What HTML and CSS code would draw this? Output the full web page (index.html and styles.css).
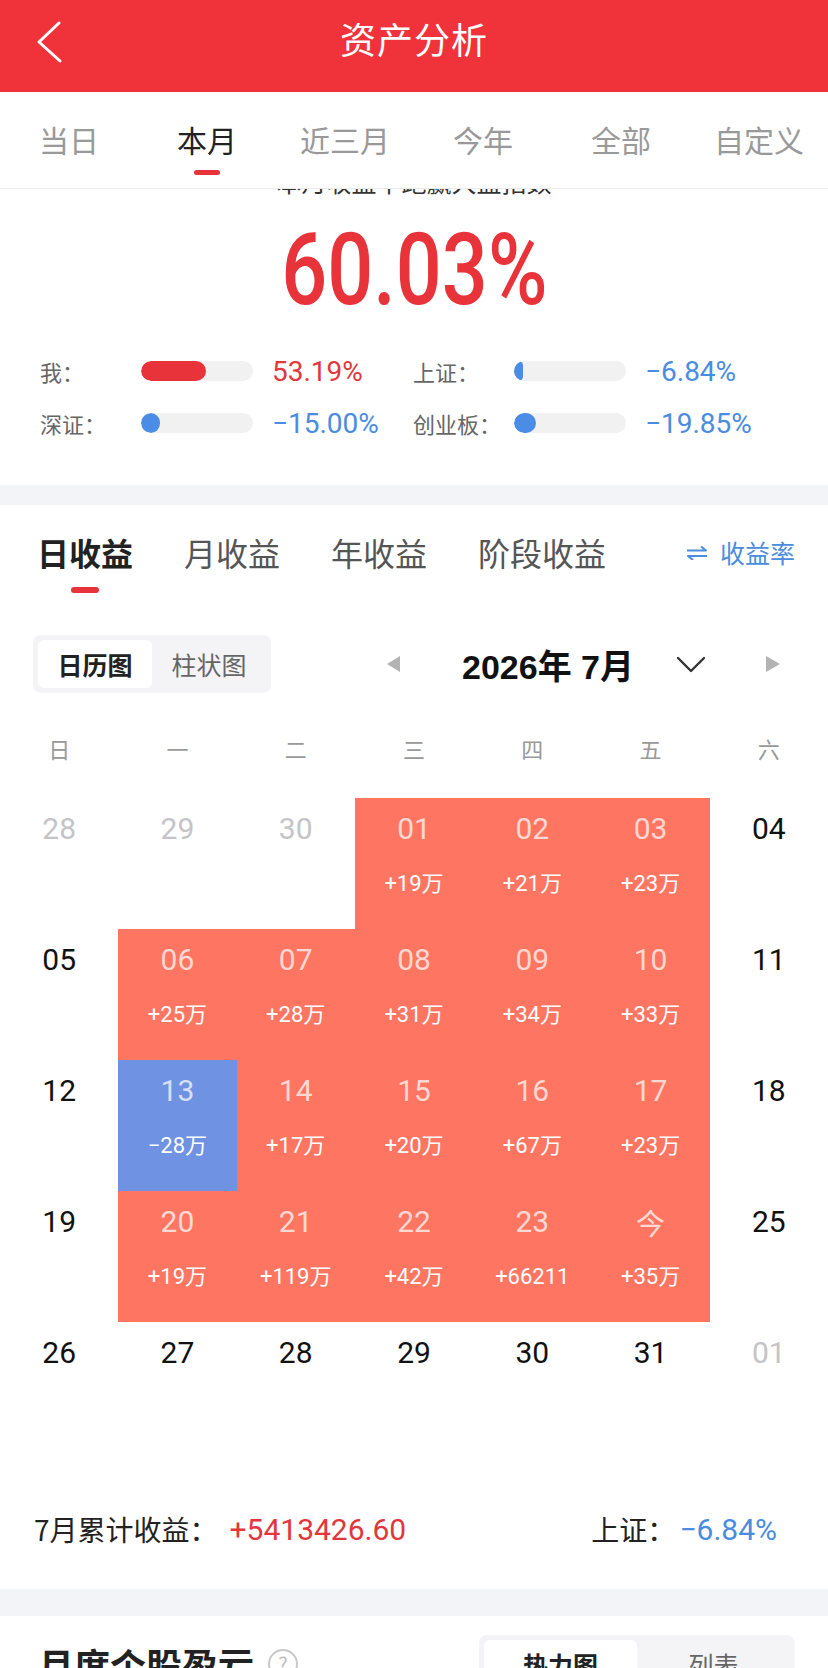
FILE: index.html
```html
<!DOCTYPE html>
<html lang="zh-CN">
<head>
<meta charset="utf-8">
<title>资产分析</title>
<link rel="stylesheet" href="styles.css">
</head>
<body>
<div class="page">
  <header class="header">
    <div class="back">
      <svg width="26" height="42" viewBox="0 0 26 42"><polyline points="22,2 2,21 23,40" fill="none" stroke="#fff" stroke-width="3" stroke-linecap="round" stroke-linejoin="round"/></svg>
    </div>
    <div class="title">资产分析</div>
    <div></div>
  </header>

  <nav class="tabs">
    <div class="tab"><span>当日</span><i></i></div>
    <div class="tab active"><span>本月</span><i></i></div>
    <div class="tab"><span>近三月</span><i></i></div>
    <div class="tab"><span>今年</span><i></i></div>
    <div class="tab"><span>全部</span><i></i></div>
    <div class="tab"><span>自定义</span><i></i></div>
  </nav>

  <section class="overview">
    <div class="peek"><div class="peek-text">本月收益率跑赢大盘指数</div></div>
    <div class="big"><span>60.03%</span></div>
    <div class="cmp">
      <div class="cmp-item">
        <span class="cmp-label">我：</span>
        <span class="track"><span class="fill red" style="width:65px"></span></span>
        <span class="cmp-val up">53.19%</span>
      </div>
      <div class="cmp-item">
        <span class="cmp-label">上证：</span>
        <span class="track"><span class="fill blue" style="width:9px"></span></span>
        <span class="cmp-val down">−6.84%</span>
      </div>
      <div class="cmp-item">
        <span class="cmp-label">深证：</span>
        <span class="track"><span class="fill blue" style="width:19px"></span></span>
        <span class="cmp-val down">−15.00%</span>
      </div>
      <div class="cmp-item">
        <span class="cmp-label">创业板：</span>
        <span class="track"><span class="fill blue" style="width:22px"></span></span>
        <span class="cmp-val down">−19.85%</span>
      </div>
    </div>
  </section>

  <div class="gap gap20"></div>

  <section class="profit">
    <div class="ptabs">
      <div class="ptab active"><span>日收益</span><i></i></div>
      <div class="ptab"><span>月收益</span><i></i></div>
      <div class="ptab"><span>年收益</span><i></i></div>
      <div class="ptab"><span>阶段收益</span><i></i></div>
      <div class="rate">
        <svg width="22" height="14" viewBox="0 0 22 14"><path d="M1 4.5 H20 L15 0.5 M21 10 H2 L7 14" fill="none" stroke="#4A8CE0" stroke-width="2" stroke-linejoin="round"/></svg>
        <span>收益率</span>
      </div>
    </div>

    <div class="ctrl">
      <div class="seg seg1">
        <span class="seg-item on">日历图</span>
        <span class="seg-item">柱状图</span>
      </div>
      <div class="month">
        <span class="tri left"></span>
        <span class="month-text">2026年 7月</span>
        <svg class="chev" width="30" height="17" viewBox="0 0 30 17"><polyline points="2,2 15,15 28,2" fill="none" stroke="#333" stroke-width="2.4" stroke-linecap="round" stroke-linejoin="round"/></svg>
        <span class="tri right"></span>
      </div>
    </div>

    <div class="weekdays">
      <span>日</span><span>一</span><span>二</span><span>三</span><span>四</span><span>五</span><span>六</span>
    </div>

    <div class="cal">
      <div class="cell other"><b>28</b></div>
      <div class="cell other"><b>29</b></div>
      <div class="cell other"><b>30</b></div>
      <div class="cell gain"><b>01</b><em>+19万</em></div>
      <div class="cell gain"><b>02</b><em>+21万</em></div>
      <div class="cell gain"><b>03</b><em>+23万</em></div>
      <div class="cell"><b>04</b></div>

      <div class="cell"><b>05</b></div>
      <div class="cell gain"><b>06</b><em>+25万</em></div>
      <div class="cell gain"><b>07</b><em>+28万</em></div>
      <div class="cell gain"><b>08</b><em>+31万</em></div>
      <div class="cell gain"><b>09</b><em>+34万</em></div>
      <div class="cell gain"><b>10</b><em>+33万</em></div>
      <div class="cell"><b>11</b></div>

      <div class="cell"><b>12</b></div>
      <div class="cell loss"><b>13</b><em>−28万</em></div>
      <div class="cell gain"><b>14</b><em>+17万</em></div>
      <div class="cell gain"><b>15</b><em>+20万</em></div>
      <div class="cell gain"><b>16</b><em>+67万</em></div>
      <div class="cell gain"><b>17</b><em>+23万</em></div>
      <div class="cell"><b>18</b></div>

      <div class="cell"><b>19</b></div>
      <div class="cell gain"><b>20</b><em>+19万</em></div>
      <div class="cell gain"><b>21</b><em>+119万</em></div>
      <div class="cell gain"><b>22</b><em>+42万</em></div>
      <div class="cell gain"><b>23</b><em>+66211</em></div>
      <div class="cell gain"><b class="cjk">今</b><em>+35万</em></div>
      <div class="cell"><b>25</b></div>

      <div class="cell"><b>26</b></div>
      <div class="cell"><b>27</b></div>
      <div class="cell"><b>28</b></div>
      <div class="cell"><b>29</b></div>
      <div class="cell"><b>30</b></div>
      <div class="cell"><b>31</b></div>
      <div class="cell other"><b>01</b></div>
    </div>

    <div class="total">
      <div class="total-left"><span class="t-label">7月累计收益：</span><span class="t-val up">+5413426.60</span></div>
      <div class="total-right"><span class="t-label">上证：</span><span class="t-val down">−6.84%</span></div>
    </div>
  </section>

  <div class="gap gap27"></div>

  <section class="stocks">
    <div class="stocks-title"><span>月度个股盈亏</span><span class="help">?</span></div>
    <div class="seg seg2">
      <span class="seg-item on">热力图</span>
      <span class="seg-item">列表</span>
    </div>
  </section>
</div>
</body>
</html>
```

FILE: styles.css
```css
* { box-sizing: border-box; }
html, body { margin: 0; padding: 0; background: #fff; }
body {
  width: 828px;
  font-family: "Noto Sans CJK SC", "Noto Sans", sans-serif;
  color: #222;
}
.page { width: 828px; overflow: hidden; }

/* header */
.header {
  height: 92px;
  background: #F0323B;
  display: grid;
  grid-template-columns: 1fr auto 1fr;
  align-items: start;
  padding-top: 12px;
}
.back { padding-left: 37px; padding-top: 9px; }
.back svg { display: block; }
.title {
  color: #fff;
  font-size: 36px;
  line-height: 52px;
  font-weight: 400;
  letter-spacing: 1px;
}

/* period tabs */
.tabs {
  height: 97px;
  display: grid;
  grid-template-columns: repeat(6, 1fr);
  border-bottom: 1px solid #ececec;
}
.tab {
  display: flex;
  flex-direction: column;
  align-items: center;
  padding-top: 27px;
}
.tab span { font-size: 30px; line-height: 40px; color: #999; }
.tab i { display: block; width: 26px; height: 5px; border-radius: 3px; margin-top: 11px; background: transparent; }
.tab.active span { color: #222; }
.tab.active i { background: #E8333A; }

/* overview */
.overview { padding-bottom: 36px; }
.peek { height: 9px; overflow: hidden; }
.peek-text {
  margin-top: -23px;
  font-size: 25px;
  line-height: 30px;
  text-align: center;
  color: #333;
  font-weight: 400;
}
.big {
  margin-top: 22px;
  height: 100px;
  line-height: 100px;
  text-align: center;
  font-family: Roboto, "Noto Sans", sans-serif;
  font-size: 100px;
  font-weight: 500;
  color: #E8333A;
}
.big span { display: inline-block; transform: scaleX(0.81); }

.cmp {
  margin-top: 25px;
  padding-left: 40px;
  display: grid;
  grid-template-columns: 373px 373px;
  grid-auto-rows: 52px;
}
.cmp-item { display: flex; align-items: center; }
.cmp-label { width: 101px; font-size: 22px; color: #666; }
.track {
  width: 112px;
  height: 20px;
  border-radius: 10px;
  background: #F1F1F1;
  display: flex;
  overflow: hidden;
}
.fill { height: 20px; border-radius: 10px; }
.fill.red { background: #E8333A; }
.fill.blue { background: #4A8CE6; }
.cmp-val {
  margin-left: 19px;
  font-family: Roboto, "Noto Sans", sans-serif;
  font-size: 28px;
}
.up { color: #E1373C; }
.down { color: #4A8CE0; }

.gap { background: #F3F4F8; }
.gap20 { height: 20px; }
.gap27 { height: 27px; }

/* profit section */
.ptabs {
  display: flex;
  align-items: flex-start;
  padding: 25px 33px 0 37px;
  gap: 51px;
}
.ptab { display: flex; flex-direction: column; align-items: center; }
.ptab span { font-size: 32px; line-height: 44px; color: #555; }
.ptab i { display: block; width: 28px; height: 6px; border-radius: 3px; margin-top: 13px; background: transparent; }
.ptab.active span { color: #222; font-weight: 700; }
.ptab.active i { background: #E8333A; }
.rate {
  margin-left: auto;
  display: flex;
  align-items: center;
  gap: 12px;
  height: 44px;
  color: #4A8CE0;
  font-size: 25px;
}
.rate svg { display: block; margin-top: 2px; }

.ctrl {
  margin-top: 42px;
  height: 58px;
  display: flex;
  align-items: center;
  padding: 0 48px 0 33px;
}
.seg {
  display: flex;
  height: 58px;
  padding: 5px;
  border-radius: 8px;
  background: #F4F4F6;
}
.seg-item {
  display: flex;
  align-items: center;
  justify-content: center;
  font-size: 25px;
  color: #666;
  border-radius: 6px;
}
.seg-item.on { background: #fff; color: #222; font-weight: 700; }
.seg1 { width: 238px; }
.seg1 .seg-item { width: 114px; }

.month { margin-left: auto; display: flex; align-items: center; }
.tri { width: 0; height: 0; border-top: 8px solid transparent; border-bottom: 8px solid transparent; }
.tri.left { border-right: 13px solid #B3B3B3; }
.tri.right { border-left: 14px solid #B3B3B3; margin-left: 60px; }
.month-text {
  margin-left: 62px;
  font-family: "Liberation Sans", "Noto Sans CJK SC", sans-serif;
  font-weight: 700;
  font-size: 34px;
  color: #111;
}
.chev { display: block; margin-left: 42px; }

.weekdays {
  margin-top: 31px;
  display: grid;
  grid-template-columns: repeat(7, 1fr);
  height: 48px;
  line-height: 48px;
  text-align: center;
  font-size: 22px;
  color: #999;
}

.cal {
  margin-top: 26px;
  display: grid;
  grid-template-columns: repeat(7, 1fr);
  grid-auto-rows: 131px;
}
.cell {
  display: flex;
  flex-direction: column;
  align-items: center;
  padding-top: 11px;
  font-family: Roboto, "Noto Sans CJK SC", sans-serif;
}
.cell b {
  font-weight: 400;
  font-size: 30px;
  line-height: 40px;
  color: #111;
}
.cell b.cjk { font-family: "Noto Sans CJK SC", sans-serif; font-size: 29px; }
.cell em {
  font-style: normal;
  font-size: 22px;
  line-height: 30px;
  margin-top: 20px;
  color: #fff;
}
.cell.other b { color: #C4C4C8; }
.cell.gain { background: #FE7662; }
.cell.loss { background: #7092E3; }
.cell.gain b, .cell.loss b { color: rgba(255, 255, 255, 0.72); }

.total {
  margin-top: 56px;
  height: 40px;
  padding: 0 51px 40px 34px;
  box-sizing: content-box;
  display: flex;
  justify-content: space-between;
  align-items: center;
}
.total-left, .total-right { display: flex; align-items: center; }
.t-label { font-size: 28px; color: #222; }
.t-val {
  font-family: Roboto, "Noto Sans", sans-serif;
  font-size: 30px;
}
.total-left .t-val { margin-left: 12px; }
.total-right .t-val { margin-left: 4px; }

/* stocks section */
.stocks {
  height: 120px;
  display: flex;
  justify-content: space-between;
  align-items: flex-start;
  padding: 19px 33px 0 38px;
}
.stocks-title {
  display: flex;
  align-items: center;
  height: 58px;
  font-size: 36px;
  font-weight: 700;
  color: #222;
  gap: 14px;
}
.help {
  width: 30px;
  height: 30px;
  border-radius: 50%;
  border: 2px solid #C8C8C8;
  color: #BDBDBD;
  font-size: 20px;
  font-weight: 400;
  display: flex;
  align-items: center;
  justify-content: center;
  line-height: 1;
}
.seg2 { width: 316px; }
.seg2 .seg-item { width: 153px; }
.seg2 .seg-item + .seg-item { flex: 1; }
```
